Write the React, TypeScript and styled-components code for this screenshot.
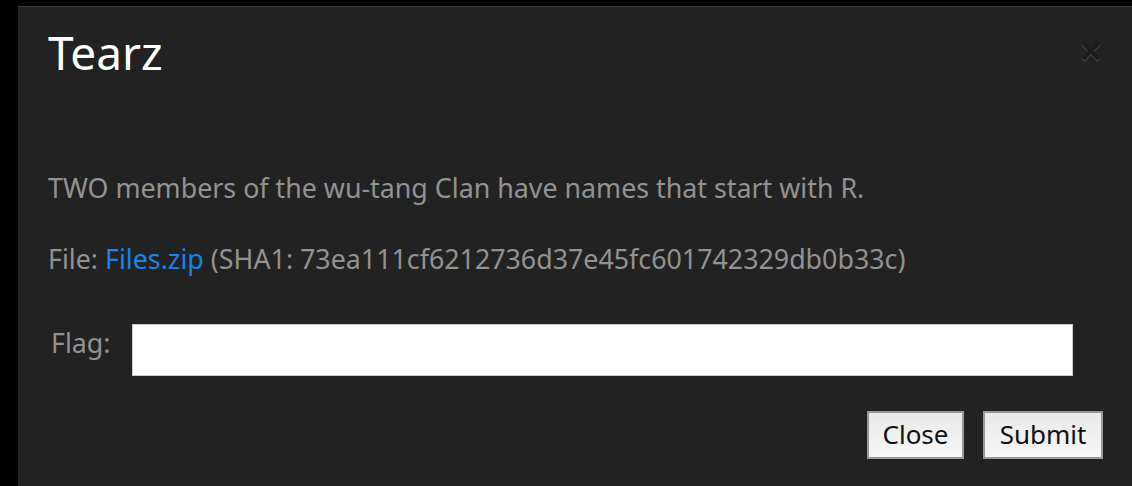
import styled, { createGlobalStyle } from "styled-components";

const GlobalStyle = createGlobalStyle`
  html, body {
    margin: 0;
    padding: 0;
    background: #000;
    overflow: hidden;
  }
  body {
    font-family: "Noto Sans", "Open Sans", sans-serif;
  }
`;

const Page = styled.div`
  width: 1132px;
  height: 486px;
  overflow: hidden;
  padding: 6px 0 0 18px;
  box-sizing: border-box;
`;

const Modal = styled.div`
  width: 1115px;
  height: 480px;
  box-sizing: border-box;
  background: #222;
  border-top: 1px solid #3a3a3a;
  padding: 0 30px;
`;

const Header = styled.div`
  display: flex;
  justify-content: space-between;
  align-items: flex-start;
  padding-top: 13px;
  height: 163px;
  box-sizing: border-box;
`;

const Title = styled.h3`
  margin: 0;
  font-size: 46px;
  font-weight: 400;
  line-height: 64px;
  color: #fff;
`;

const CloseX = styled.button`
  border: 0;
  background: none;
  padding: 0;
  margin: 12px 1px 0 0;
  font-family: "Liberation Sans", sans-serif;
  font-size: 38px;
  font-weight: 700;
  line-height: 1;
  color: #000;
  opacity: 0.2;
  text-shadow: 0 1px 0 #fff;
  cursor: pointer;
`;

const Text = styled.p`
  margin: 0 0 35px;
  font-size: 26.8px;
  line-height: 36px;
  color: #929292;
`;

const Link = styled.a`
  color: #1a82e8;
  text-decoration: none;
`;

const FlagRow = styled.div`
  display: grid;
  grid-template-columns: 84px 941px;
  align-items: start;
  margin-top: 47px;
`;

const Label = styled.label`
  padding-left: 3px;
  margin-top: 1px;
  font-size: 26.8px;
  line-height: 36px;
  color: #929292;
`;

const Input = styled.input`
  height: 52px;
  box-sizing: border-box;
  border: 1px solid #ccc;
  background: #fff;
  font-size: 24px;
  padding: 0 10px;
  outline: none;
`;

const Footer = styled.div`
  display: flex;
  justify-content: flex-end;
  gap: 19px;
  margin-top: 35px;
`;

const Button = styled.button<{ $w: number }>`
  width: ${(p) => p.$w}px;
  height: 48px;
  box-sizing: border-box;
  border: 2px solid #999;
  background: linear-gradient(#e9e9e9, #f6f6f6);
  font-family: "Noto Sans", sans-serif;
  font-size: 26px;
  line-height: 1;
  color: #111;
  padding: 0 0 2px;
  cursor: pointer;
`;

export default function App() {
  return (
    <>
      <GlobalStyle />
      <Page>
        <Modal>
          <Header>
            <Title>Tearz</Title>
            <CloseX aria-label="Close">×</CloseX>
          </Header>
          <Text>TWO members of the wu-tang Clan have names that start with R.</Text>
          <Text>
            File: <Link href="#">Files.zip</Link> (SHA1: 73ea111cf6212736d37e45fc601742329db0b33c)
          </Text>
          <FlagRow>
            <Label htmlFor="flag">Flag:</Label>
            <Input id="flag" type="text" />
          </FlagRow>
          <Footer>
            <Button $w={97}>Close</Button>
            <Button $w={120}>Submit</Button>
          </Footer>
        </Modal>
      </Page>
    </>
  );
}
